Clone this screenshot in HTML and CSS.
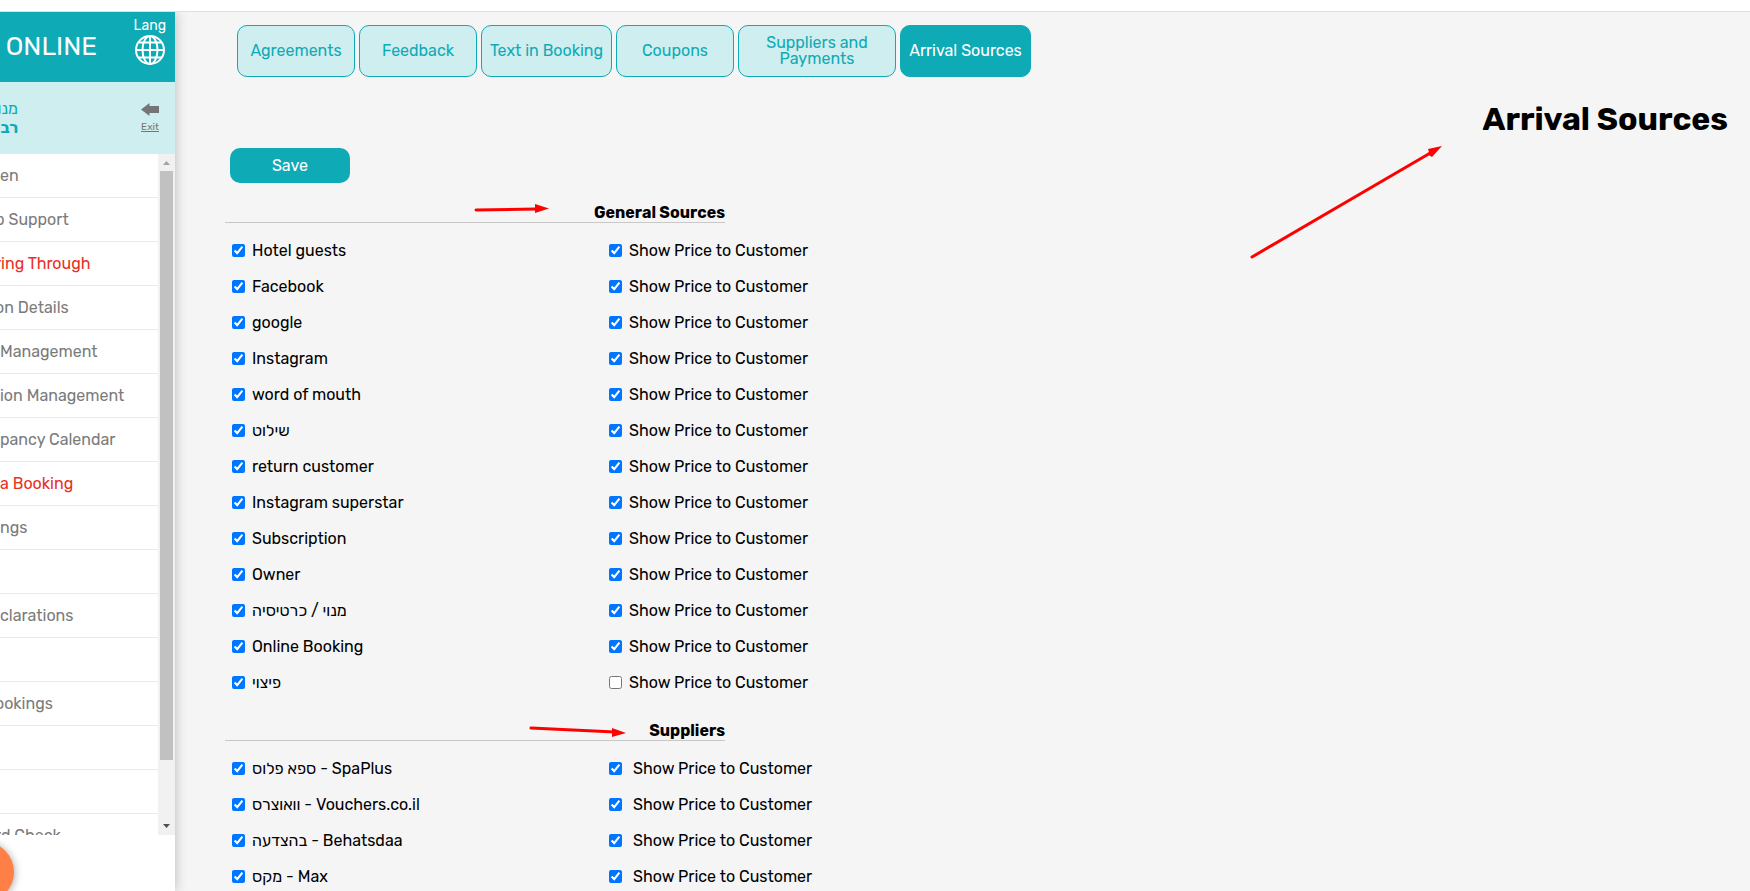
FILE: index.html
```html
<!DOCTYPE html>
<html lang="en">
<head>
<meta charset="utf-8">
<title>Arrival Sources</title>
<link rel="stylesheet" href="styles.css">
</head>
<body>
<div class="topline"></div>
<div class="app">
  <aside class="sidebar">
    <header class="brand">
      <span class="logo">ONLINE</span>
      <button class="lang" type="button">
        <span>Lang</span>
        <svg width="30" height="30" viewBox="0 0 30 30" fill="none" stroke="#fff" stroke-width="2" aria-hidden="true">
          <circle cx="15" cy="15" r="14"/>
          <ellipse cx="15" cy="15" rx="7.5" ry="14"/>
          <path d="M15 1v28M1 15h28M4 7.5h22M4 22.5h22"/>
        </svg>
      </button>
    </header>
    <div class="user">
      <div class="names" dir="rtl"><span>מנו</span><b>רב</b></div>
      <a class="exit" href="#">
        <svg width="18" height="13" viewBox="0 0 18 13" fill="#757575" aria-hidden="true"><path d="M0 6.5 8.5 0v3H18v7H8.500v3z"/></svg>
        <span>Exit</span>
      </a>
    </div>
    <div class="menu-wrap">
      <nav class="menu">
        <a href="#">en</a>
        <a class="cut" href="#">p Support</a>
        <a class="cut alert" href="#">ring Through</a>
        <a class="cut" href="#">on Details</a>
        <a href="#">Management</a>
        <a href="#">ion Management</a>
        <a href="#">pancy Calendar</a>
        <a class="alert" href="#">a Booking</a>
        <a href="#">ngs</a>
        <a href="#" aria-label="Menu item"></a>
        <a href="#">clarations</a>
        <a href="#" aria-label="Menu item"></a>
        <a class="cut" href="#">ookings</a>
        <a href="#" aria-label="Menu item"></a>
        <a href="#" aria-label="Menu item"></a>
        <a class="cut" href="#">rd Check</a>
      </nav>
      <div class="scrollbar" aria-hidden="true">
        <svg width="17" height="17" viewBox="0 0 17 17"><path d="M5 11h7L8.500 7z" fill="#a3a3a3"/></svg>
        <div class="track"><div class="thumb"></div></div>
        <svg width="17" height="17" viewBox="0 0 17 17"><path d="M5 6h7L8.500 10z" fill="#505050"/></svg>
      </div>
    </div>
    <button class="bubble" type="button" aria-label="Chat"></button>
  </aside>

  <main class="main">
    <nav class="tabs">
      <a href="#">Agreements</a>
      <a href="#">Feedback</a>
      <a class="medium" href="#">Text in Booking</a>
      <a href="#">Coupons</a>
      <a class="wide" href="#">Suppliers and Payments</a>
      <a class="medium active" href="#">Arrival Sources</a>
    </nav>
    <div class="title">
      <h1>Arrival Sources</h1>
      <svg class="arrow arrow-title" width="194" height="116" viewBox="0 0 194 116" aria-hidden="true"><path d="M3 113 183 8" stroke="red" stroke-width="3" stroke-linecap="round"/><path d="M193 2 179 5l1 3-2 2 5 3z" fill="red"/></svg>
    </div>
    <button class="save" type="button">Save</button>

    <section>
      <h2>General Sources
        <svg class="arrow arrow-general" width="76" height="12" viewBox="0 0 76 12" aria-hidden="true"><path d="M2 7 62 6" stroke="red" stroke-width="3" stroke-linecap="round"/><path d="M75 5.500 61 1v9z" fill="red"/></svg>
      </h2>
      <div class="rows">
        <label><input type="checkbox" checked>Hotel guests</label><label><input type="checkbox" checked>Show Price to Customer</label>
        <label><input type="checkbox" checked>Facebook</label><label><input type="checkbox" checked>Show Price to Customer</label>
        <label><input type="checkbox" checked>google</label><label><input type="checkbox" checked>Show Price to Customer</label>
        <label><input type="checkbox" checked>Instagram</label><label><input type="checkbox" checked>Show Price to Customer</label>
        <label><input type="checkbox" checked>word of mouth</label><label><input type="checkbox" checked>Show Price to Customer</label>
        <label><input type="checkbox" checked><span dir="rtl">שילוט</span></label><label><input type="checkbox" checked>Show Price to Customer</label>
        <label><input type="checkbox" checked>return customer</label><label><input type="checkbox" checked>Show Price to Customer</label>
        <label><input type="checkbox" checked>Instagram superstar</label><label><input type="checkbox" checked>Show Price to Customer</label>
        <label><input type="checkbox" checked>Subscription</label><label><input type="checkbox" checked>Show Price to Customer</label>
        <label><input type="checkbox" checked>Owner</label><label><input type="checkbox" checked>Show Price to Customer</label>
        <label><input type="checkbox" checked><span dir="rtl">מנוי / כרטיסיה</span></label><label><input type="checkbox" checked>Show Price to Customer</label>
        <label><input type="checkbox" checked>Online Booking</label><label><input type="checkbox" checked>Show Price to Customer</label>
        <label><input type="checkbox" checked><span dir="rtl">פיצוי</span></label><label><input type="checkbox">Show Price to Customer</label>
      </div>
    </section>

    <section>
      <h2>Suppliers
        <svg class="arrow arrow-suppliers" width="98" height="14" viewBox="0 0 98 14" aria-hidden="true"><path d="M2 3 86 7" stroke="red" stroke-width="3" stroke-linecap="round"/><path d="M97 8 83 3v9z" fill="red"/></svg>
      </h2>
      <div class="rows suppliers">
        <label><input type="checkbox" checked><span>ספא פלוס - SpaPlus</span></label><label><input type="checkbox" checked>Show Price to Customer</label>
        <label><input type="checkbox" checked><span>וואוצרס - Vouchers.co.il</span></label><label><input type="checkbox" checked>Show Price to Customer</label>
        <label><input type="checkbox" checked><span>בהצדעה - Behatsdaa</span></label><label><input type="checkbox" checked>Show Price to Customer</label>
        <label><input type="checkbox" checked><span>מקס - Max</span></label><label><input type="checkbox" checked>Show Price to Customer</label>
      </div>
    </section>
  </main>
</div>
</body>
</html>
```
FILE: styles.css
```css
* { box-sizing: border-box; }
body {
  margin: 0;
  height: 100vh;
  display: flex;
  flex-direction: column;
  overflow: hidden;
  background: #fff;
  color: #000;
  font: 16px/19px Rubik, Inter, "Open Sans", "Liberation Sans", sans-serif;
}
a { color: inherit; text-decoration: none; }
button { font: inherit; border: 0; padding: 0; cursor: pointer; }
svg { display: block; }

.topline { flex: none; height: 12px; border-bottom: 1px solid #e0e0e0; }
.app { flex: 1; min-height: 0; display: flex; background: #f5f5f5; }

.sidebar {
  position: relative;
  z-index: 1;
  flex: none;
  width: 175px;
  display: flex;
  flex-direction: column;
  background: #fff;
  box-shadow: 0 0 12px rgba(0, 0, 0, 0.25);
  clip-path: inset(0 -16px 0 0);
}
.brand {
  flex: none;
  height: 70px;
  padding: 4px 9px 0 0;
  display: flex;
  justify-content: space-between;
  background: #0eaab6;
  color: #fff;
}
.logo {
  width: 97px;
  padding-top: 15px;
  display: flex;
  justify-content: flex-end;
  overflow: hidden;
  font-size: 26px;
  line-height: 32px;
}
.lang {
  display: flex;
  flex-direction: column;
  align-items: center;
  background: none;
  color: #fff;
  font-size: 14px;
}
.user {
  flex: none;
  height: 72px;
  padding: 17px 16px 0 0;
  display: flex;
  justify-content: space-between;
  background: #cfeeef;
}
.names {
  width: 18px;
  display: flex;
  flex-direction: column;
  overflow: hidden;
  color: #0eaab6;
}
.exit {
  padding-top: 4px;
  display: flex;
  flex-direction: column;
  align-items: center;
  gap: 2px;
  color: #757575;
  font-size: 10px;
}
.exit span { text-decoration: underline; }

.menu-wrap { flex: 1; min-height: 0; margin-bottom: 56px; display: flex; overflow: hidden; }
.menu { flex: 1; overflow: hidden; color: #7b7b7b; }
.menu a {
  height: 44px;
  display: flex;
  align-items: center;
  border-bottom: 1px solid #ebebeb;
  white-space: nowrap;
}
.menu .cut { text-indent: -5px; }
.menu .alert { color: #e8301f; }
.scrollbar { width: 17px; display: flex; flex-direction: column; background: #f1f1f1; }
.track { flex: 1; padding: 0 2px; }
.thumb { height: 91%; background: #c1c1c1; }
.bubble {
  position: absolute;
  left: -46px;
  bottom: -11px;
  width: 60px;
  height: 60px;
  border-radius: 50%;
  background: #ff7f47;
  box-shadow: 0 1px 8px rgba(0, 0, 0, 0.4);
}

.main { flex: 1; min-width: 0; overflow: hidden; padding: 13px 22px 0 50px; }
.tabs { padding-left: 12px; display: flex; gap: 4px; }
.tabs a {
  width: 118px;
  height: 52px;
  display: flex;
  align-items: center;
  justify-content: center;
  border: 1px solid #0eaab6;
  border-radius: 10px;
  background: #cfeeef;
  color: #0eaab6;
  line-height: 16px;
  text-align: center;
}
.tabs .medium { width: 131px; }
.tabs .wide { width: 158px; padding: 0 16px; }
.tabs .active { background: #0eaab6; color: #fff; }

.title { position: relative; padding-top: 23px; text-align: right; }
h1 { margin: 0; font-size: 32px; line-height: 38px; }
.arrow { position: absolute; }
.arrow-title { right: 285px; top: 67px; }
.save {
  margin: 10px 0 0 5px;
  width: 120px;
  height: 35px;
  border-radius: 10px;
  background: #0eaab6;
  color: #fff;
}
h2 {
  position: relative;
  width: 500px;
  margin: 20px 0 0;
  border-bottom: 1px solid #c8c8c8;
  font-size: 16px;
  line-height: 19px;
  text-align: right;
}
.arrow-general { left: 249px; top: 0; }
.arrow-suppliers { left: 304px; top: 4px; }
.rows {
  padding: 9px 0 1px 7px;
  display: grid;
  grid-template-columns: 377px max-content;
  grid-auto-rows: 36px;
}
.rows label { display: flex; align-items: center; gap: 7px; }
.rows input { margin: 0; width: 13px; height: 13px; }
.suppliers label:nth-child(even) { gap: 11px; }
```
